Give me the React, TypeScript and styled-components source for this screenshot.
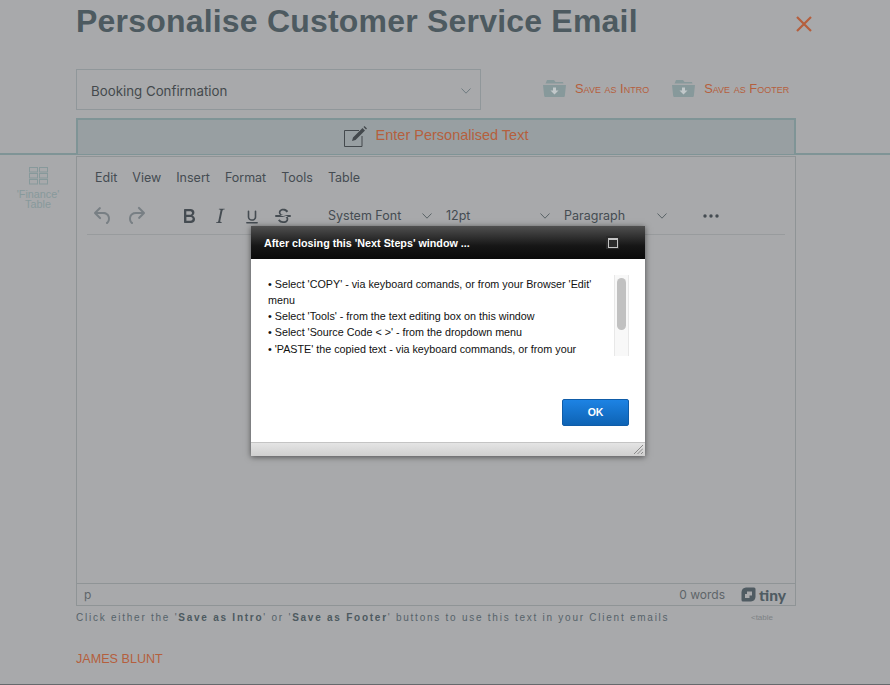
import React from "react";
import styled, { createGlobalStyle } from "styled-components";

const Global = createGlobalStyle`
  html, body { margin: 0; padding: 0; background: #a8a9ab; }
  body { font-family: "Liberation Sans", Arial, sans-serif; }
  * { box-sizing: border-box; }
`;

const Page = styled.div`
  position: relative;
  width: 890px;
  height: 685px;
  overflow: hidden;
  background: #a8a9ab;
  border-bottom: 1px solid #66696c;
`;
const Header = styled.header`
  height: 155px;
  padding-left: 76px;
  border-bottom: 2px solid #7f9496;
`;
const TitleRow = styled.div`
  display: flex;
  justify-content: space-between;
  height: 69px;
  width: 737px;
`;
const Title = styled.h1`
  margin: 3px 0 0;
  font-size: 32px;
  line-height: 37px;
  font-weight: 700;
  color: #4d5a60;
  letter-spacing: 0.2px;
`;
const Close = styled.button`
  border: 0;
  background: none;
  padding: 0;
  width: 18px;
  height: 18px;
  margin-top: 15px;
  display: block;
  svg { display: block; }
`;
const Controls = styled.div`
  display: flex;
  height: 41px;
  align-items: flex-start;
`;
const Select = styled.div`
  width: 405px;
  height: 41px;
  border: 1px solid #90979a;
  padding: 2px 9px 0 14px;
  display: flex;
  align-items: center;
  justify-content: space-between;
  font-family: Inter, sans-serif;
  font-size: 13.3px;
  color: #44494d;
`;
const SaveGroup = styled.div`
  display: flex;
  margin-left: 62px;
  gap: 23px;
  height: 41px;
  align-items: center;
  padding-bottom: 3px;
`;
const SaveButton = styled.button`
  display: flex;
  align-items: center;
  border: 0;
  background: none;
  padding: 0;
  gap: 9px;
  font-family: "Liberation Sans", Arial, sans-serif;
  font-size: 12.9px;
  font-variant: small-caps;
  color: #b55f3d;
  svg { display: block; }
`;
const EnterBar = styled.div`
  margin-top: 8px;
  width: 720px;
  height: 36px;
  background: #989fa2;
  border: 2px solid #7f9496;
  border-bottom: 0;
  padding-bottom: 4px;
  display: flex;
  align-items: center;
  justify-content: center;
  gap: 9px;
  color: #b55f3d;
  font-size: 14.5px;
  svg { display: block; margin-top: 2px; }
`;
const Content = styled.div`
  display: flex;
`;
const Side = styled.aside`
  width: 76px;
  padding-top: 12px;
  display: flex;
  flex-direction: column;
  align-items: center;
  font-size: 10.8px;
  line-height: 10px;
  color: #87999b;
  text-align: center;
  svg { display: block; margin-bottom: 4px; }
`;
const Main = styled.main`
  width: 720px;
  padding-top: 1px;
`;
const Editor = styled.section`
  height: 450px;
  border: 1px solid #8f9496;
  display: flex;
  flex-direction: column;
  font-family: Inter, sans-serif;
`;
const MenuBar = styled.nav`
  display: flex;
  gap: 15px;
  padding: 13px 0 0 18px;
  height: 40px;
  font-size: 12.5px;
  line-height: 16px;
  color: #454c52;
`;
const Toolbar = styled.div`
  display: flex;
  align-items: center;
  height: 38px;
  margin: 0 10px;
  padding: 0 0 0 4px;
  border-bottom: 1px solid #989b9d;
`;
const Tool = styled.span<{ $w: number; $dim?: boolean }>`
  width: ${(p) => p.$w}px;
  display: flex;
  flex: none;
  color: ${(p) => (p.$dim ? "#787f84" : "#454c52")};
  svg { display: block; fill: currentColor; }
`;
const Drop = styled.span<{ $w: number; $pr: number }>`
  width: ${(p) => p.$w}px;
  flex: none;
  display: flex;
  align-items: center;
  justify-content: space-between;
  font-size: 12.5px;
  color: #454c52;
  padding-right: ${(p) => p.$pr}px;
  svg { display: block; }
`;
const EditArea = styled.div`
  flex: 1;
`;
const StatusBar = styled.footer`
  height: 22px;
  border-top: 1px solid #8f9496;
  display: flex;
  align-items: center;
  justify-content: space-between;
  padding: 0 9px 0 7px;
  font-size: 12px;
  color: #5e6569;
`;
const StatusRight = styled.div`
  display: flex;
  align-items: center;
  gap: 16px;
`;
const Tiny = styled.span`
  display: flex;
  align-items: center;
  gap: 3px;
  font-family: Lato, sans-serif;
  font-weight: 900;
  font-size: 15.5px;
  color: #4f5b62;
  svg { display: block; }
`;
const NoteRow = styled.div`
  display: flex;
  justify-content: space-between;
  align-items: center;
  height: 24px;
  padding-bottom: 2px;
`;
const Note = styled.p`
  margin: 0;
  font-size: 10px;
  letter-spacing: 1.75px;
  color: #56636a;
  b { font-weight: 700; color: #4d5a60; }
`;
const TableTag = styled.span`
  font-size: 8px;
  color: #7d8285;
  margin-right: 23px;
`;
const Author = styled.div`
  margin-top: 21px;
  font-size: 12.6px;
  line-height: 16px;
  color: #b55f3d;
`;
const Dialog = styled.div`
  position: absolute;
  left: 251px;
  top: 226px;
  width: 394px;
  height: 230px;
  background: #fff;
  display: flex;
  flex-direction: column;
  box-shadow: 0 1px 6px rgba(0, 0, 0, 0.55);
`;
const DialogHead = styled.div`
  height: 33px;
  flex: none;
  padding: 0 6px 0 13px;
  display: flex;
  align-items: center;
  justify-content: space-between;
  background: linear-gradient(#505050, #161616 60%, #0a0a0a);
  color: #fff;
  font-size: 10.75px;
  font-weight: 700;
`;
const MaxBox = styled.span`
  width: 13px;
  height: 13px;
  margin-right: 20px;
  display: flex;
  align-items: center;
  justify-content: center;
  background: #2b2b2b;
  &::after {
    content: "";
    width: 8px;
    height: 7px;
    border: 1px solid #c4c4c4;
    border-top-width: 2px;
  }
`;
const DialogBody = styled.div`
  flex: 1;
  padding: 16px 16px 0 17px;
  display: flex;
  flex-direction: column;
`;
const ScrollBox = styled.div`
  display: flex;
  height: 81px;
  justify-content: space-between;
`;
const Lines = styled.div`
  width: 335px;
  height: 81px;
  overflow: hidden;
  font-size: 10.75px;
  line-height: 16.3px;
  color: #111;
  padding-top: 0.5px;
`;
const Track = styled.div`
  width: 15px;
  height: 81px;
  background: #f8f8f8;
  border-left: 1px solid #e8e8e8;
  border-right: 1px solid #e8e8e8;
  padding: 3px 2px;
`;
const Thumb = styled.div`
  width: 9px;
  height: 52px;
  border-radius: 5px;
  background: #c1c1c1;
`;
const OkRow = styled.div`
  display: flex;
  justify-content: flex-end;
  margin-top: 43px;
`;
const OkButton = styled.button`
  width: 67px;
  height: 27px;
  border: 1px solid #0f5ca8;
  border-radius: 2px;
  background: linear-gradient(#1d83e4, #0e63b4);
  color: #fff;
  font-family: "Liberation Sans", Arial, sans-serif;
  font-size: 10.5px;
  font-weight: 700;
  padding: 0 0 2px;
`;
const DialogFoot = styled.div`
  height: 14px;
  flex: none;
  border-top: 1px solid #c4c4c4;
  background: linear-gradient(#e4e4e4, #cfcfcf);
  display: flex;
  justify-content: flex-end;
  align-items: flex-end;
  padding: 0 2px 2px 0;
  svg { display: block; }
`;

const Folder = () => (
  <svg width="23" height="18" viewBox="0 0 23 18">
    <path d="M3 3.5 L4 1 H11 L12.5 3 H20 L20.5 4.5 H2.5 Z" fill="#87999b" />
    <path d="M0 6 H23 L21.8 17 Q21.7 18 20.7 18 H2.3 Q1.3 18 1.2 17 Z" fill="#87999b" />
    <path d="M10 8.5 H13 V11.5 H15.5 L11.5 15.5 L7.5 11.5 H10 Z" fill="#c2c8ca" />
  </svg>
);
const Chevron = ({ c = "#6f7b80" }: { c?: string }) => (
  <svg width="10" height="6" viewBox="0 0 10 6" fill="none" stroke={c} strokeWidth="1">
    <path d="M.5.5 5 5.2 9.5.5" />
  </svg>
);

const I = ({ d }: { d: string }) => (
  <svg width="24" height="24" viewBox="0 0 24 24"><path d={d} fillRule="evenodd" /></svg>
);

const icons = {
  undo: "M6.4 8H12c3.7 0 6.2 2 6.8 5.1.6 2.7-.4 5.6-2.3 6.8a1 1 0 0 1-1-1.8c1.1-.6 1.8-2.7 1.4-4.6-.5-2.1-2.1-3.5-4.9-3.5H6.4l3.3 3.3a1 1 0 1 1-1.4 1.4l-5-5a1 1 0 0 1 0-1.4l5-5a1 1 0 0 1 1.4 1.4L6.4 8z",
  redo: "M17.6 10H12c-2.8 0-4.4 1.4-4.9 3.5-.4 2 .3 4 1.4 4.6a1 1 0 1 1-1 1.8c-2-1.2-2.9-4.1-2.3-6.8.6-3.1 3-5.1 6.8-5.1h5.6l-3.3-3.3a1 1 0 1 1 1.4-1.4l5 5a1 1 0 0 1 0 1.4l-5 5a1 1 0 0 1-1.4-1.4l3.3-3.3z",
  bold: "M7.8 19c-.3 0-.5 0-.6-.2l-.2-.5V5.7c0-.2 0-.4.2-.5l.6-.2h5c1.5 0 2.7.3 3.5 1 .7.6 1.1 1.4 1.1 2.5a3 3 0 0 1-.6 1.9c-.4.6-1 1-1.6 1.2.4.1.9.3 1.3.6s.8.7 1 1.2c.4.4.5 1 .5 1.6 0 1.3-.4 2.3-1.3 3-.8.7-2.1 1-3.8 1H7.8zm5-8.3c.6 0 1.2-.1 1.6-.5.4-.3.6-.7.6-1.3 0-1.1-.8-1.7-2.3-1.7H9.3v3.5h3.4zm.5 6c.7 0 1.3-.1 1.7-.4.4-.4.6-.9.6-1.5s-.2-1-.7-1.4c-.4-.3-1-.4-2-.4H9.4v3.8h4z",
  italic: "M16.7 4.7l-.1.9h-.3c-.6 0-1 0-1.4.3-.3.3-.4.6-.5 1.1l-2.1 9.8v.6c0 .5.4.8 1.4.8h.2l-.2.8H8l.2-.8h.2c1.1 0 1.8-.5 2-1.5l2-9.8.1-.5c0-.6-.4-.8-1.4-.8h-.3l.2-.9h5.8z",
  underline: "M15.5 6.5c.5 0 .8.3.8.8v5.7c0 2.3-1.9 3.8-4.3 3.8s-4.3-1.5-4.3-3.8V7.3c0-.5.3-.8.8-.8s.8.3.8.8v5.7c0 1.4 1.2 2.3 2.7 2.3s2.7-.9 2.7-2.3V7.3c0-.5.3-.8.8-.8zM6.8 18h10.4a.7.7 0 0 1 0 1.4H6.8a.7.7 0 0 1 0-1.4z",
  strike: "M15.6 8.5c-.5-.7-1-1.1-1.3-1.3-.6-.4-1.3-.6-2-.6-2.7 0-2.8 1.7-2.8 2.1 0 1.6 1.8 2 3.2 2.3 4.4.9 4.6 2.8 4.6 3.9 0 1.4-.7 4.1-5 4.1A6.2 6.2 0 0 1 7 16.4l1.5-1.1c.4.6 1.6 2 3.7 2 1.6 0 2.5-.4 3-1 .3-.4.4-.9.4-1.4 0-1.9-1.8-2.4-3.4-2.7-1.9-.4-4.4-1.2-4.4-3.6 0-1.3.8-3.9 4.5-3.9 1.6 0 2.9.5 3.8 1.3.4.3.8.8 1.1 1.3l-1.6 1.2zM5 11h14a1 1 0 0 1 0 2H5a1 1 0 0 1 0-2z",
};

export default function App() {
  return (
    <Page>
      <Global />
      <Header>
        <TitleRow>
          <Title>Personalise Customer Service Email</Title>
          <Close aria-label="Close">
            <svg width="18" height="18" viewBox="0 0 18 18" fill="none" stroke="#b55f3d" strokeWidth="2.2">
              <path d="M2 2 16 16M16 2 2 16" />
            </svg>
          </Close>
        </TitleRow>
        <Controls>
          <Select>
            Booking Confirmation
            <Chevron />
          </Select>
          <SaveGroup>
            <SaveButton><Folder />Save as Intro</SaveButton>
            <SaveButton><Folder />Save as Footer</SaveButton>
          </SaveGroup>
        </Controls>
        <EnterBar>
          <svg width="23" height="21" viewBox="0 0 23 21" fill="none">
            <path d="M15 4.5H.5V20.5H18V10" stroke="#44494d" />
            <path d="M8 15 9 11.5 18.5 2 21 4.5 11.5 14Z M19.5 1 20.5 0 23 2.5 22 3.5Z" fill="#44494d" />
          </svg>
          Enter Personalised Text
        </EnterBar>
      </Header>
      <Content>
        <Side>
          <svg width="19" height="18" viewBox="0 0 19 18" fill="none" stroke="#87999b" strokeWidth="1">
            <rect x=".5" y=".5" width="8" height="4.5" />
            <rect x="10.5" y=".5" width="8" height="4.5" />
            <rect x=".5" y="6.5" width="8" height="4.5" />
            <rect x="10.5" y="6.5" width="8" height="4.5" />
            <rect x=".5" y="12.5" width="8" height="4.5" />
            <rect x="10.5" y="12.5" width="8" height="4.5" />
          </svg>
          <span>'Finance'<br />Table</span>
        </Side>
        <Main>
          <Editor>
            <MenuBar>
              <span>Edit</span><span>View</span><span>Insert</span><span>Format</span><span>Tools</span><span>Table</span>
            </MenuBar>
            <Toolbar>
              <Tool $w={33} $dim><I d={icons.undo} /></Tool>
              <Tool $w={53} $dim><I d={icons.redo} /></Tool>
              <Tool $w={31}><I d={icons.bold} /></Tool>
              <Tool $w={32}><I d={icons.italic} /></Tool>
              <Tool $w={31}><I d={icons.underline} /></Tool>
              <Tool $w={57}><I d={icons.strike} /></Tool>
              <Drop $w={118} $pr={14}>System Font<Chevron c="#5a6367" /></Drop>
              <Drop $w={118} $pr={14}>12pt<Chevron c="#5a6367" /></Drop>
              <Drop $w={139} $pr={36}>Paragraph<Chevron c="#5a6367" /></Drop>
              <Tool $w={24}>
                <svg width="16" height="4" viewBox="0 0 16 4"><circle cx="2" cy="2" r="1.7" /><circle cx="8" cy="2" r="1.7" /><circle cx="14" cy="2" r="1.7" /></svg>
              </Tool>
            </Toolbar>
            <EditArea />
            <StatusBar>
              <span>p</span>
              <StatusRight>
                <span>0 words</span>
                <Tiny>
                  <svg width="15" height="15" viewBox="0 0 15 15">
                    <path d="M5 .5h8a1.5 1.5 0 0 1 1.5 1.5v8a5 5 0 0 1-4.5 4.5H2A1.5 1.5 0 0 1 .5 13V5A5 5 0 0 1 5 .5ZM6 4.5V7H4V11H8.5V8.5H11V4.5Z" fill="#4f5b62" fillRule="evenodd" />
                  </svg>
                  tiny
                </Tiny>
              </StatusRight>
            </StatusBar>
          </Editor>
          <NoteRow>
            <Note>Click either the '<b>Save as Intro</b>' or '<b>Save as Footer</b>' buttons to use this text in your Client emails</Note>
            <TableTag>&lt;table</TableTag>
          </NoteRow>
          <Author>JAMES BLUNT</Author>
        </Main>
      </Content>
      <Dialog>
        <DialogHead>
          After closing this 'Next Steps' window ...
          <MaxBox />
        </DialogHead>
        <DialogBody>
          <ScrollBox>
            <Lines>
              • Select 'COPY' - via keyboard comands, or from your Browser 'Edit' menu<br />
              • Select 'Tools' - from the text editing box on this window<br />
              • Select 'Source Code &lt; &gt;' - from the dropdown menu<br />
              • 'PASTE' the copied text - via keyboard commands, or from your
            </Lines>
            <Track><Thumb /></Track>
          </ScrollBox>
          <OkRow><OkButton>OK</OkButton></OkRow>
        </DialogBody>
        <DialogFoot>
          <svg width="9" height="9" viewBox="0 0 9 9" stroke="#8a8a8a" strokeWidth="1">
            <path d="M0 9 9 0M3.5 9 9 3.5M7 9 9 7" />
          </svg>
        </DialogFoot>
      </Dialog>
    </Page>
  );
}
